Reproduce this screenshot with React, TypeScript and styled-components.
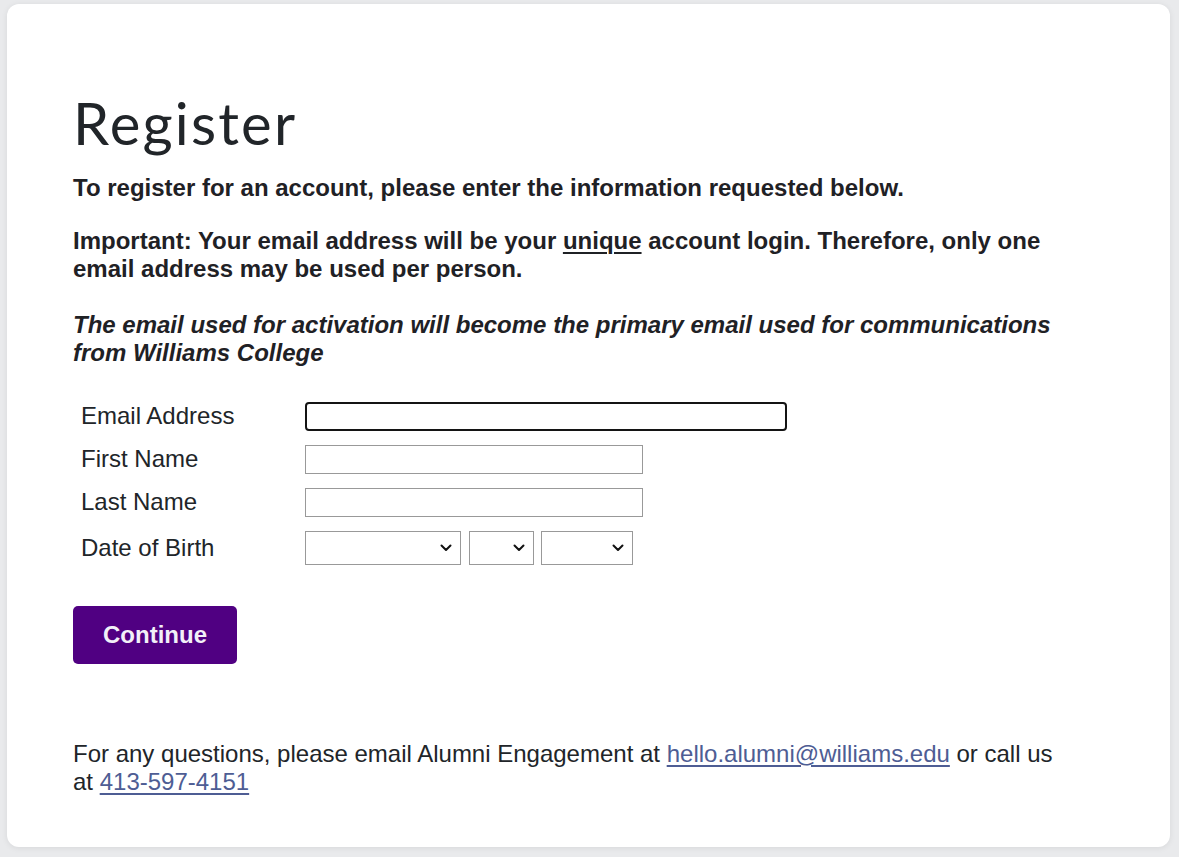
import { useState } from "react";
import styled, { createGlobalStyle } from "styled-components";

const GlobalStyle = createGlobalStyle`
  html, body {
    margin: 0;
    padding: 0;
    background: #e9eaec;
  }
  body {
    font-family: "Liberation Sans", Arial, sans-serif;
    color: #212529;
  }
`;

const months = ["January", "February", "March", "April", "May", "June", "July", "August", "September", "October", "November", "December"];

function Chevron() {
  return (
    <ChevronIcon width="12" height="8" viewBox="0 0 12 8" aria-hidden="true">
      <path d="M1.5 1.5 L6 6 L10.5 1.5" fill="none" stroke="#111" strokeWidth="2" strokeLinecap="round" strokeLinejoin="round" />
    </ChevronIcon>
  );
}

function DateSelect({ width, id, options }: { width: number; id?: string; options: (string | number)[] }) {
  return (
    <SelectWrap $w={width}>
      <Select id={id} defaultValue="">
        <option value=""></option>
        {options.map((o) => (
          <option key={o}>{o}</option>
        ))}
      </Select>
      <Chevron />
    </SelectWrap>
  );
}

export default function App() {
  const [email, setEmail] = useState("");
  const [first, setFirst] = useState("");
  const [last, setLast] = useState("");

  return (
    <>
      <GlobalStyle />
      <Page>
        <Card>
          <Content>
            <Title>Register</Title>
            <Lead>To register for an account, please enter the information requested below.</Lead>
            <Lead>
              Important: Your email address will be your <u>unique</u> account login. Therefore, only one
              email address may be used per person.
            </Lead>
            <Note>
              The email used for activation will become the primary email used for communications from
              Williams College
            </Note>

            <Form onSubmit={(e) => e.preventDefault()}>
              <Label htmlFor="email">Email Address</Label>
              <Field>
                <Input id="email" $wide $focused value={email} onChange={(e) => setEmail(e.target.value)} autoFocus />
              </Field>
              <Label htmlFor="first">First Name</Label>
              <Field>
                <Input id="first" value={first} onChange={(e) => setFirst(e.target.value)} />
              </Field>
              <Label htmlFor="last">Last Name</Label>
              <Field>
                <Input id="last" value={last} onChange={(e) => setLast(e.target.value)} />
              </Field>
              <Label htmlFor="month">Date of Birth</Label>
              <Field>
                <DateSelect id="month" width={156} options={months} />
                <DateSelect width={65} options={Array.from({ length: 31 }, (_, i) => i + 1)} />
                <DateSelect width={92} options={Array.from({ length: 90 }, (_, i) => 2010 - i)} />
              </Field>
            </Form>

            <Button type="button">Continue</Button>

            <Footer>
              For any questions, please email Alumni Engagement at{" "}
              <Link href="#">hello.alumni@williams.edu</Link> or call us at{" "}
              <Link href="#">413-597-4151</Link>
            </Footer>
          </Content>
        </Card>
      </Page>
    </>
  );
}

const Page = styled.div`
  padding: 4px 9px 10px 7px;
  min-height: 100vh;
  box-sizing: border-box;
`;

const Card = styled.div`
  background: #ffffff;
  border-radius: 12px;
  box-shadow: 0 1px 6px rgba(0, 0, 0, 0.08);
  padding: 84px 67px 51px 66px;
`;

const Content = styled.div`
  max-width: 990px;
`;

const Title = styled.h1`
  margin: 0 0 16px;
  font-family: Lato, "Noto Sans", sans-serif;
  font-weight: 400;
  font-size: 58px;
  letter-spacing: 2.2px;
  line-height: 1.2;
  color: #212529;
`;

const Lead = styled.p`
  margin: 0 0 25px;
  font-size: 24px;
  font-weight: 700;
  line-height: normal;
  color: #1f2125;

  u {
    text-decoration-thickness: 2px;
    text-underline-offset: 3px;
  }
`;

const Note = styled(Lead)`
  margin-top: 28px;
  font-style: italic;
`;

const Form = styled.form`
  display: grid;
  grid-template-columns: 224px auto;
  align-items: center;
  row-gap: 14px;
  margin-top: 35px;
  padding-left: 8px;
`;

const Label = styled.label`
  font-size: 24px;
  line-height: normal;
  color: #212529;
`;

const Field = styled.div`
  display: flex;
  align-items: center;
  gap: 7.5px;
`;

const Input = styled.input<{ $wide?: boolean; $focused?: boolean }>`
  box-sizing: border-box;
  width: ${(p) => (p.$wide ? 482 : 338)}px;
  height: 29px;
  padding: 2px 6px;
  font-family: "Liberation Sans", Arial, sans-serif;
  font-size: 20px;
  color: #111;
  caret-color: #000;
  background: #fff;
  border: ${(p) => (p.$focused ? "2px solid #141414" : "1px solid #999999")};
  border-radius: ${(p) => (p.$focused ? "4px" : "0")};
  outline: none;
`;

const SelectWrap = styled.div<{ $w: number }>`
  position: relative;
  width: ${(p) => p.$w}px;
  height: 34px;
`;

const Select = styled.select`
  box-sizing: border-box;
  appearance: none;
  width: 100%;
  height: 100%;
  padding: 0 28px 0 6px;
  font-family: "Liberation Sans", Arial, sans-serif;
  font-size: 18px;
  color: #111;
  background: #fff;
  border: 1px solid #999999;
  border-radius: 0;
`;

const ChevronIcon = styled.svg`
  position: absolute;
  right: 9px;
  top: 13px;
  pointer-events: none;
`;

const Button = styled.button`
  display: block;
  margin-top: 41px;
  height: 58px;
  padding: 0 30px;
  font-family: "Liberation Sans", Arial, sans-serif;
  font-size: 24px;
  font-weight: 700;
  color: #f2f0f8;
  background: #500082;
  border: none;
  border-radius: 5px;
  cursor: pointer;
`;

const Footer = styled.p`
  margin: 76px 0 0;
  font-size: 24px;
  line-height: normal;
  color: #212529;
`;

const Link = styled.a`
  color: #4e5d94;
  text-decoration: underline;
  text-decoration-thickness: 2px;
  text-underline-offset: 3px;
`;
